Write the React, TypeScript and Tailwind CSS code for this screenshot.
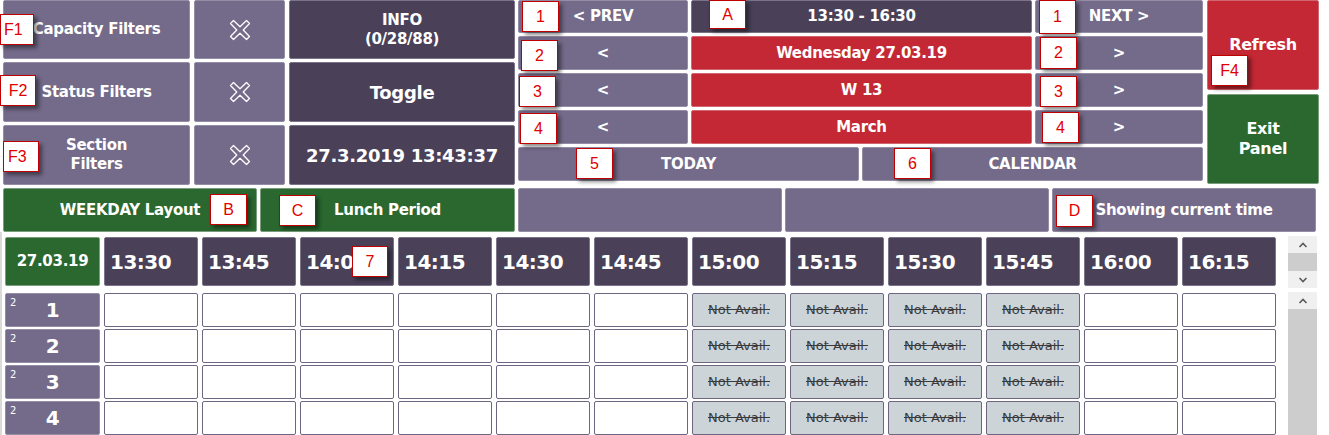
import React from "react";

const LP = "bg-[#746a89] border border-[#958da6] rounded-[2px] text-white font-bold flex items-center justify-center text-center";
const DP = "bg-[#4a4159] border border-[#7b7389] rounded-[2px] text-white font-bold flex items-center justify-center text-center";
const RD = "bg-[#c32834] border border-[#d06770] rounded-[2px] text-white font-bold flex items-center justify-center text-center";
const GR = "bg-[#2a6830] border border-[#7a9d7d] rounded-[2px] text-white font-bold flex items-center justify-center text-center";

function XIcon() {
  return (
    <svg width="24" height="24" viewBox="0 0 24 24">
      <polygon
        points="2.5,5.5 5.5,2.5 12,8.8 18.5,2.5 21.5,5.5 15.2,12 21.5,18.5 18.5,21.5 12,15.2 5.5,21.5 2.5,18.5 8.8,12"
        fill="none"
        stroke="white"
        strokeWidth="1.3"
        strokeLinejoin="round"
      />
    </svg>
  );
}

function Note({ label, x, y, w = 37, h = 31, pl }: { label: string; x: number; y: number; w?: number; h?: number; pl?: number }) {
  return (
    <div
      className="absolute bg-white border border-[#c00000] shadow-[3px_3px_4px_rgba(0,0,0,0.45)] flex items-center text-[#e00000] text-[16px] font-['Liberation_Sans',Arial,sans-serif] leading-none tracking-normal"
      style={{ left: x, top: y, width: w, height: h, paddingLeft: pl, justifyContent: pl !== undefined ? "flex-start" : "center" }}
    >
      {label}
    </div>
  );
}

function Chevron({ up }: { up?: boolean }) {
  return (
    <svg width="10" height="6" viewBox="0 0 10 6">
      <polyline
        points={up ? "1.5,5 5,1.5 8.5,5" : "1.5,1 5,4.5 8.5,1"}
        fill="none"
        stroke="#5a5a5a"
        strokeWidth="1.6"
      />
    </svg>
  );
}

const times = ["13:30", "13:45", "14:00", "14:15", "14:30", "14:45", "15:00", "15:15", "15:30", "15:45", "16:00", "16:15"];

export default function App() {
  return (
    <div className="relative w-[1329px] h-[435px] overflow-hidden bg-white font-['DejaVu_Sans',Verdana,sans-serif] tracking-[-0.3px]">
      {/* Top section */}
      <div className="flex items-start pl-[3px] h-[185px]">
        {/* Left grid */}
        <div className="grid grid-cols-[187px_91px_226px] grid-rows-[59px_60px_60px] gap-x-[4px] gap-y-[3px]">
          <div className={LP + " text-[15px] text-[#f3f2f6]"}>Capacity Filters</div>
          <div className={LP}><XIcon /></div>
          <div className={DP + " flex-col text-[15px] leading-[19px]"}>
            <span>INFO</span>
            <span>(0/28/88)</span>
          </div>
          <div className={LP + " text-[15px] text-[#f3f2f6]"}>Status Filters</div>
          <div className={LP}><XIcon /></div>
          <div className={DP + " text-[18px]"}>Toggle</div>
          <div className={LP + " flex-col text-[15px] leading-[19px] text-[#f3f2f6]"}>
            <span>Section</span>
            <span>Filters</span>
          </div>
          <div className={LP}><XIcon /></div>
          <div className={DP + " text-[18px]"}>27.3.2019 13:43:37</div>
        </div>

        {/* Middle nav */}
        <div className="ml-[3px] w-[685px] flex flex-col gap-[3px]">
          <div className="grid grid-cols-[170px_341px_168px] grid-rows-[33px_34px_34px_34px] gap-x-[3px] gap-y-[3px]">
            <div className={LP + " text-[15px]"}>&lt; PREV</div>
            <div className={DP + " text-[15px]"}>13:30 - 16:30</div>
            <div className={LP + " text-[15px]"}>NEXT &gt;</div>
            <div className={LP + " text-[15px]"}>&lt;</div>
            <div className={RD + " text-[15px]"}>Wednesday 27.03.19</div>
            <div className={LP + " text-[15px]"}>&gt;</div>
            <div className={LP + " text-[15px]"}>&lt;</div>
            <div className={RD + " text-[15px]"}>W 13</div>
            <div className={LP + " text-[15px]"}>&gt;</div>
            <div className={LP + " text-[15px]"}>&lt;</div>
            <div className={RD + " text-[15px]"}>March</div>
            <div className={LP + " text-[15px]"}>&gt;</div>
          </div>
          <div className="flex gap-[3px] h-[34px]">
            <div className={LP + " w-[341px] text-[15px]"}>TODAY</div>
            <div className={LP + " w-[341px] text-[15px]"}>CALENDAR</div>
          </div>
        </div>

        {/* Right */}
        <div className="ml-[4px] w-[112px] flex flex-col gap-[4px]">
          <div className={RD + " h-[90px] text-[16px]"}>Refresh</div>
          <div className={GR + " h-[90px] flex-col text-[16px] leading-[20px]"}>
            <span>Exit</span>
            <span>Panel</span>
          </div>
        </div>
      </div>

      {/* Second row */}
      <div className="flex gap-[3px] pl-[3px] mt-[3px] h-[44px]">
        <div className={GR + " w-[254px] text-[15px]"}>WEEKDAY Layout</div>
        <div className={GR + " w-[255px] text-[15px]"}>Lunch Period</div>
        <div className={LP + " w-[264px]"}></div>
        <div className={LP + " w-[264px]"}></div>
        <div className={LP + " w-[264px] text-[15px] text-[#eeecf2]"}>Showing current time</div>
      </div>

      {/* Lower area */}
      <div className="flex items-start border-l-[2px] border-[#dadada] h-[203px]">
        <div className="pl-[3px] pt-[5px] flex flex-col">
          <div className="flex gap-[4px] h-[49px]">
            <div className={GR + " w-[95px] text-[15px]"}>27.03.19</div>
            {times.map((t) => (
              <div key={t} className={DP + " w-[94px] !justify-start pl-[5px] text-[20px] tracking-[-0.5px]"}>
                {t}
              </div>
            ))}
          </div>
          <div className="flex flex-col gap-[2px] mt-[7px]">
            {[1, 2, 3, 4].map((n) => (
              <div key={n} className="flex gap-[4px] h-[34px]">
                <div className={LP + " relative w-[95px] text-[20px]"}>
                  <span className="absolute left-[4px] top-[1px] text-[10px] font-normal tracking-normal">2</span>
                  {n}
                </div>
                {times.map((t, i) =>
                  i >= 6 && i <= 9 ? (
                    <div
                      key={t}
                      className="w-[94px] bg-[#ccd4d8] border border-[#6e6583] rounded-[2px] flex items-center justify-center text-[13px] text-[#3a3a3a] line-through tracking-normal"
                    >
                      Not Avail.
                    </div>
                  ) : (
                    <div key={t} className="w-[94px] bg-white border border-[#6e6583] rounded-[2px]"></div>
                  )
                )}
              </div>
            ))}
          </div>
        </div>
        <div className="ml-[12px] mt-[4px] w-[29px] flex flex-col gap-[4px]">
          <div className="h-[52px] bg-[#f0f0f0] flex flex-col">
            <div className="h-[17px] flex items-center justify-center"><Chevron up /></div>
            <div className="h-[18px] bg-[#cdcdcd]"></div>
            <div className="h-[17px] flex items-center justify-center"><Chevron /></div>
          </div>
          <div className="h-[150px] bg-[#cdcdcd] flex flex-col">
            <div className="h-[17px] bg-[#f0f0f0] flex items-center justify-center"><Chevron up /></div>
          </div>
        </div>
      </div>

      {/* Annotations */}
      <Note label="F1" x={0} y={14} w={34} pl={3} />
      <Note label="F2" x={0} y={75} w={36} />
      <Note label="F3" x={3} y={141} w={36} pl={4} />
      <Note label="1" x={522} y={1} />
      <Note label="A" x={709} y={0} h={29} />
      <Note label="2" x={521} y={40} />
      <Note label="3" x={519} y={76} />
      <Note label="4" x={520} y={113} />
      <Note label="5" x={576} y={148} />
      <Note label="6" x={894} y={148} />
      <Note label="1" x={1039} y={0} h={34} />
      <Note label="2" x={1040} y={37} h={32} />
      <Note label="3" x={1040} y={76} />
      <Note label="4" x={1042} y={112} />
      <Note label="F4" x={1211} y={55} />
      <Note label="B" x={210} y={194} />
      <Note label="C" x={279} y={195} />
      <Note label="D" x={1056} y={195} h={32} />
      <Note label="7" x={352} y={246} w={36} />
    </div>
  );
}
